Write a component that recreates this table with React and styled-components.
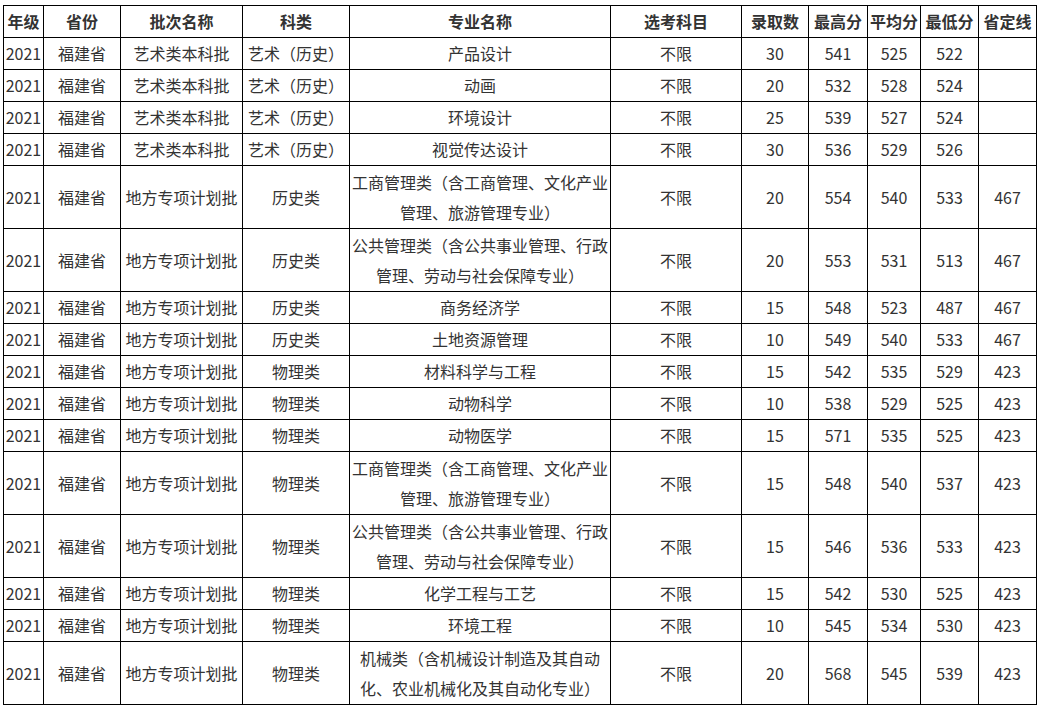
import React from "react";
import styled, { createGlobalStyle } from "styled-components";

const Global = createGlobalStyle`
  html, body { margin: 0; padding: 0; background: #fff; }
  body { font-family: "Noto Sans CJK SC", "Noto Sans", sans-serif; color: #333; }
`;

const Wrap = styled.div`
  padding: 5px 0 0 3px;
`;

const Table = styled.table`
  border-collapse: collapse;
  table-layout: fixed;
  width: 1033px;
  font-size: 16px;
`;

const Th = styled.th`
  border: 1px solid #000;
  padding: 0;
  height: 31px;
  line-height: 31px;
  font-weight: bold;
  color: #333;
  text-align: center;
  white-space: nowrap;
  overflow: hidden;
`;

const Td = styled.td`
  border: 1px solid #000;
  padding: 0;
  line-height: ${(p) => (p.$multi ? "30px" : "31px")};
  height: ${(p) => (p.$tall ? "62px" : "31px")};
  text-align: center;
  vertical-align: middle;
  color: #333;
  white-space: ${(p) => (p.$wrap ? "normal" : "nowrap")};
  overflow: hidden;
`;

const widths = [40, 77, 122, 107, 261, 131, 67, 59, 53, 58, 58];
const headers = ["年级", "省份", "批次名称", "科类", "专业名称", "选考科目", "录取数", "最高分", "平均分", "最低分", "省定线"];

const rows = [
  ["艺术类本科批", "艺术（历史）", "产品设计", "30", "541", "525", "522", ""],
  ["艺术类本科批", "艺术（历史）", "动画", "20", "532", "528", "524", ""],
  ["艺术类本科批", "艺术（历史）", "环境设计", "25", "539", "527", "524", ""],
  ["艺术类本科批", "艺术（历史）", "视觉传达设计", "30", "536", "529", "526", ""],
  ["地方专项计划批", "历史类", ["工商管理类（含工商管理、文化产业", "管理、旅游管理专业）"], "20", "554", "540", "533", "467"],
  ["地方专项计划批", "历史类", ["公共管理类（含公共事业管理、行政", "管理、劳动与社会保障专业）"], "20", "553", "531", "513", "467"],
  ["地方专项计划批", "历史类", "商务经济学", "15", "548", "523", "487", "467"],
  ["地方专项计划批", "历史类", "土地资源管理", "10", "549", "540", "533", "467"],
  ["地方专项计划批", "物理类", "材料科学与工程", "15", "542", "535", "529", "423"],
  ["地方专项计划批", "物理类", "动物科学", "10", "538", "529", "525", "423"],
  ["地方专项计划批", "物理类", "动物医学", "15", "571", "535", "525", "423"],
  ["地方专项计划批", "物理类", ["工商管理类（含工商管理、文化产业", "管理、旅游管理专业）"], "15", "548", "540", "537", "423"],
  ["地方专项计划批", "物理类", ["公共管理类（含公共事业管理、行政", "管理、劳动与社会保障专业）"], "15", "546", "536", "533", "423"],
  ["地方专项计划批", "物理类", "化学工程与工艺", "15", "542", "530", "525", "423"],
  ["地方专项计划批", "物理类", "环境工程", "10", "545", "534", "530", "423"],
  ["地方专项计划批", "物理类", ["机械类（含机械设计制造及其自动", "化、农业机械化及其自动化专业）"], "20", "568", "545", "539", "423"],
];

export default function App() {
  return (
    <Wrap>
      <Global />
      <Table>
        <colgroup>
          {widths.map((w, i) => (
            <col key={i} style={{ width: w }} />
          ))}
        </colgroup>
        <thead>
          <tr>
            {headers.map((h) => (
              <Th key={h}>{h}</Th>
            ))}
          </tr>
        </thead>
        <tbody>
          {rows.map((r, i) => {
            const tall = Array.isArray(r[2]);
            return (
              <tr key={i}>
                <Td $tall={tall}>2021</Td>
                <Td $tall={tall}>福建省</Td>
                <Td $tall={tall}>{r[0]}</Td>
                <Td $tall={tall}>{r[1]}</Td>
                <Td $tall={tall} $multi={tall}>
                  {tall ? (
                    <>
                      {r[2][0]}
                      <br />
                      {r[2][1]}
                    </>
                  ) : (
                    r[2]
                  )}
                </Td>
                <Td $tall={tall}>不限</Td>
                <Td $tall={tall}>{r[3]}</Td>
                <Td $tall={tall}>{r[4]}</Td>
                <Td $tall={tall}>{r[5]}</Td>
                <Td $tall={tall}>{r[6]}</Td>
                <Td $tall={tall}>{r[7]}</Td>
              </tr>
            );
          })}
        </tbody>
      </Table>
    </Wrap>
  );
}
